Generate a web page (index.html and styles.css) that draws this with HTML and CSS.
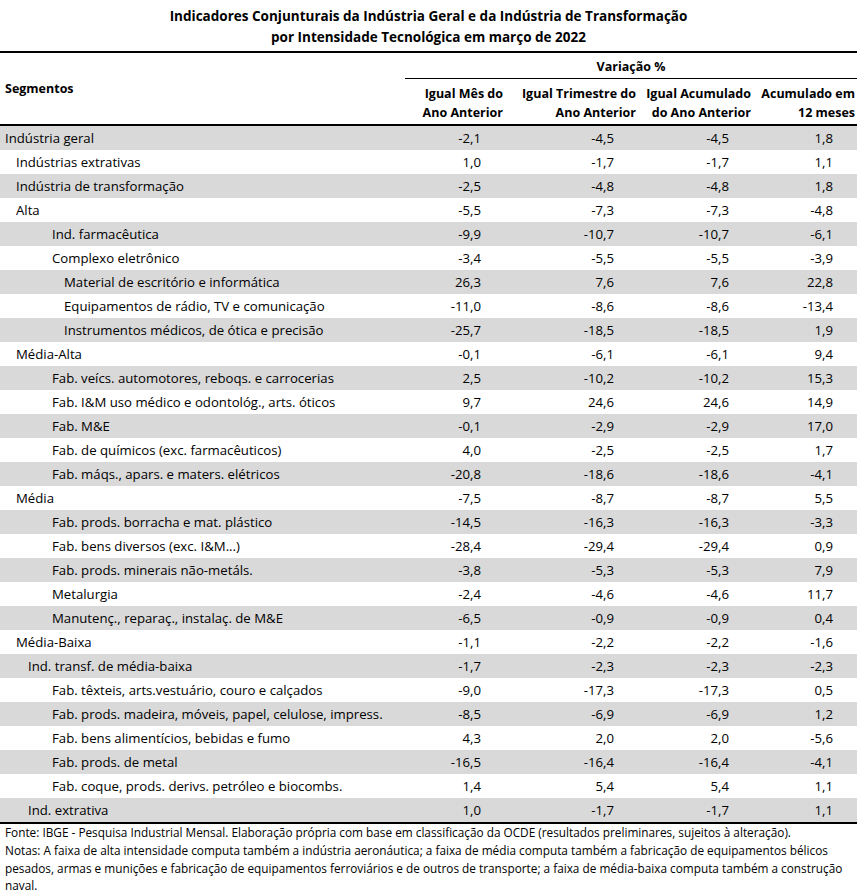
FILE: index.html
```html
<!DOCTYPE html>
<html lang="pt-BR">
<head>
<meta charset="utf-8">
<title>Indicadores Conjunturais</title>
<link rel="stylesheet" href="styles.css">
</head>
<body>
<div class="page">
  <div class="title">Indicadores Conjunturais da Indústria Geral e da Indústria de Transformação<br>por Intensidade Tecnológica em março de 2022</div>
  <table class="tbl">
    <colgroup>
      <col class="c0"><col class="c1"><col class="c2"><col class="c3"><col class="c4">
    </colgroup>
    <thead>
      <tr class="hrow1">
        <th class="seg" rowspan="2">Segmentos</th>
        <th class="var" colspan="4">Variação %</th>
      </tr>
      <tr class="hrow2">
        <th class="num-h">Igual Mês do<br>Ano Anterior</th>
        <th class="num-h">Igual Trimestre do<br>Ano Anterior</th>
        <th class="num-h">Igual Acumulado<br>do Ano Anterior</th>
        <th class="num-h">Acumulado em<br>12 meses</th>
      </tr>
    </thead>
    <tbody>
      <tr><td class="l0">Indústria geral</td><td>-2,1</td><td>-4,5</td><td>-4,5</td><td>1,8</td></tr>
      <tr><td class="l1">Indústrias extrativas</td><td>1,0</td><td>-1,7</td><td>-1,7</td><td>1,1</td></tr>
      <tr><td class="l1">Indústria de transformação</td><td>-2,5</td><td>-4,8</td><td>-4,8</td><td>1,8</td></tr>
      <tr><td class="l1">Alta</td><td>-5,5</td><td>-7,3</td><td>-7,3</td><td>-4,8</td></tr>
      <tr><td class="l3">Ind. farmacêutica</td><td>-9,9</td><td>-10,7</td><td>-10,7</td><td>-6,1</td></tr>
      <tr><td class="l3">Complexo eletrônico</td><td>-3,4</td><td>-5,5</td><td>-5,5</td><td>-3,9</td></tr>
      <tr><td class="l4">Material de escritório e informática</td><td>26,3</td><td>7,6</td><td>7,6</td><td>22,8</td></tr>
      <tr><td class="l4">Equipamentos de rádio, TV e comunicação</td><td>-11,0</td><td>-8,6</td><td>-8,6</td><td>-13,4</td></tr>
      <tr><td class="l4">Instrumentos médicos, de ótica e precisão</td><td>-25,7</td><td>-18,5</td><td>-18,5</td><td>1,9</td></tr>
      <tr><td class="l1">Média-Alta</td><td>-0,1</td><td>-6,1</td><td>-6,1</td><td>9,4</td></tr>
      <tr><td class="l3">Fab. veícs. automotores, reboqs. e carrocerias</td><td>2,5</td><td>-10,2</td><td>-10,2</td><td>15,3</td></tr>
      <tr><td class="l3">Fab. I&amp;M uso médico e odontológ., arts. óticos</td><td>9,7</td><td>24,6</td><td>24,6</td><td>14,9</td></tr>
      <tr><td class="l3">Fab. M&amp;E</td><td>-0,1</td><td>-2,9</td><td>-2,9</td><td>17,0</td></tr>
      <tr><td class="l3">Fab. de químicos (exc. farmacêuticos)</td><td>4,0</td><td>-2,5</td><td>-2,5</td><td>1,7</td></tr>
      <tr><td class="l3">Fab. máqs., apars. e maters. elétricos</td><td>-20,8</td><td>-18,6</td><td>-18,6</td><td>-4,1</td></tr>
      <tr><td class="l1">Média</td><td>-7,5</td><td>-8,7</td><td>-8,7</td><td>5,5</td></tr>
      <tr><td class="l3">Fab. prods. borracha e mat. plástico</td><td>-14,5</td><td>-16,3</td><td>-16,3</td><td>-3,3</td></tr>
      <tr><td class="l3">Fab. bens diversos (exc. I&amp;M...)</td><td>-28,4</td><td>-29,4</td><td>-29,4</td><td>0,9</td></tr>
      <tr><td class="l3">Fab. prods. minerais não-metáls.</td><td>-3,8</td><td>-5,3</td><td>-5,3</td><td>7,9</td></tr>
      <tr><td class="l3">Metalurgia</td><td>-2,4</td><td>-4,6</td><td>-4,6</td><td>11,7</td></tr>
      <tr><td class="l3">Manutenç., reparaç., instalaç. de M&amp;E</td><td>-6,5</td><td>-0,9</td><td>-0,9</td><td>0,4</td></tr>
      <tr><td class="l1">Média-Baixa</td><td>-1,1</td><td>-2,2</td><td>-2,2</td><td>-1,6</td></tr>
      <tr><td class="l2">Ind. transf. de média-baixa</td><td>-1,7</td><td>-2,3</td><td>-2,3</td><td>-2,3</td></tr>
      <tr><td class="l3">Fab. têxteis, arts.vestuário, couro e calçados</td><td>-9,0</td><td>-17,3</td><td>-17,3</td><td>0,5</td></tr>
      <tr><td class="l3">Fab. prods. madeira, móveis, papel, celulose, impress.</td><td>-8,5</td><td>-6,9</td><td>-6,9</td><td>1,2</td></tr>
      <tr><td class="l3">Fab. bens alimentícios, bebidas e fumo</td><td>4,3</td><td>2,0</td><td>2,0</td><td>-5,6</td></tr>
      <tr><td class="l3">Fab. prods. de metal</td><td>-16,5</td><td>-16,4</td><td>-16,4</td><td>-4,1</td></tr>
      <tr><td class="l3">Fab. coque, prods. derivs. petróleo e biocombs.</td><td>1,4</td><td>5,4</td><td>5,4</td><td>1,1</td></tr>
      <tr><td class="l2">Ind. extrativa</td><td>1,0</td><td>-1,7</td><td>-1,7</td><td>1,1</td></tr>
    </tbody>
  </table>
  <div class="notes">
    <p>Fonte: IBGE - Pesquisa Industrial Mensal. Elaboração própria com base em classificação da OCDE (resultados preliminares, sujeitos à alteração).</p>
    <p>Notas: A faixa de alta intensidade computa também a indústria aeronáutica; a faixa de média computa também a fabricação de equipamentos bélicos pesados, armas e munições e fabricação de equipamentos ferroviários e de outros de transporte; a faixa de média-baixa computa também a construção naval.</p>
  </div>
</div>
</body>
</html>
```
FILE: styles.css
```css
html, body {
  margin: 0;
  padding: 0;
  background: #ffffff;
}
body {
  font-family: "Open Sans", "Noto Sans", "Liberation Sans", sans-serif;
  color: #000;
}
.page {
  width: 857px;
}
.title {
  font-weight: bold;
  font-size: 13.5px;
  line-height: 21px;
  text-align: center;
  padding: 6px 0 3px 0;
}
.tbl {
  width: 857px;
  border-collapse: collapse;
  table-layout: fixed;
  font-size: 13.2px;
}
.c0 { width: 405px; }
.c1 { width: 100px; }
.c2 { width: 133px; }
.c3 { width: 115px; }
.c4 { width: 104px; }
.tbl thead tr.hrow1 th {
  border-top: 2px solid #000;
}
.tbl thead tr.hrow2 th {
  border-bottom: 2px solid #000;
}
.tbl th {
  font-weight: bold;
  font-size: 12.5px;
  padding: 0;
}
.tbl th.seg {
  text-align: left;
  padding-left: 5px;
  vertical-align: middle;
  border-bottom: 2px solid #000;
}
.tbl th.var {
  text-align: center;
  height: 24px;
  border-bottom: 1px solid #000;
  padding-top: 1px;
}
.tbl th.num-h {
  text-align: right;
  padding: 5px 2px 2px 0;
  line-height: 19px;
  vertical-align: top;
  white-space: nowrap;
}
.tbl td {
  height: 24px;
  padding: 0 24px 0 0;
  text-align: right;
  white-space: nowrap;
}
.tbl tbody tr:nth-child(odd) td {
  background: #d9d9d9;
}
.tbl tbody tr:last-child td {
  border-bottom: 2px solid #000;
}
.tbl td.l0, .tbl td.l1, .tbl td.l2, .tbl td.l3, .tbl td.l4 {
  text-align: left;
}
.tbl td.l0 { padding-left: 5px; }
.tbl td.l1 { padding-left: 16px; }
.tbl td.l2 { padding-left: 28px; }
.tbl td.l3 { padding-left: 52px; }
.tbl td.l4 { padding-left: 64px; }
.notes {
  font-size: 11.8px;
  line-height: 17.8px;
  padding: 0 8px 0 5px;
}
.notes p {
  margin: 0;
}
```
